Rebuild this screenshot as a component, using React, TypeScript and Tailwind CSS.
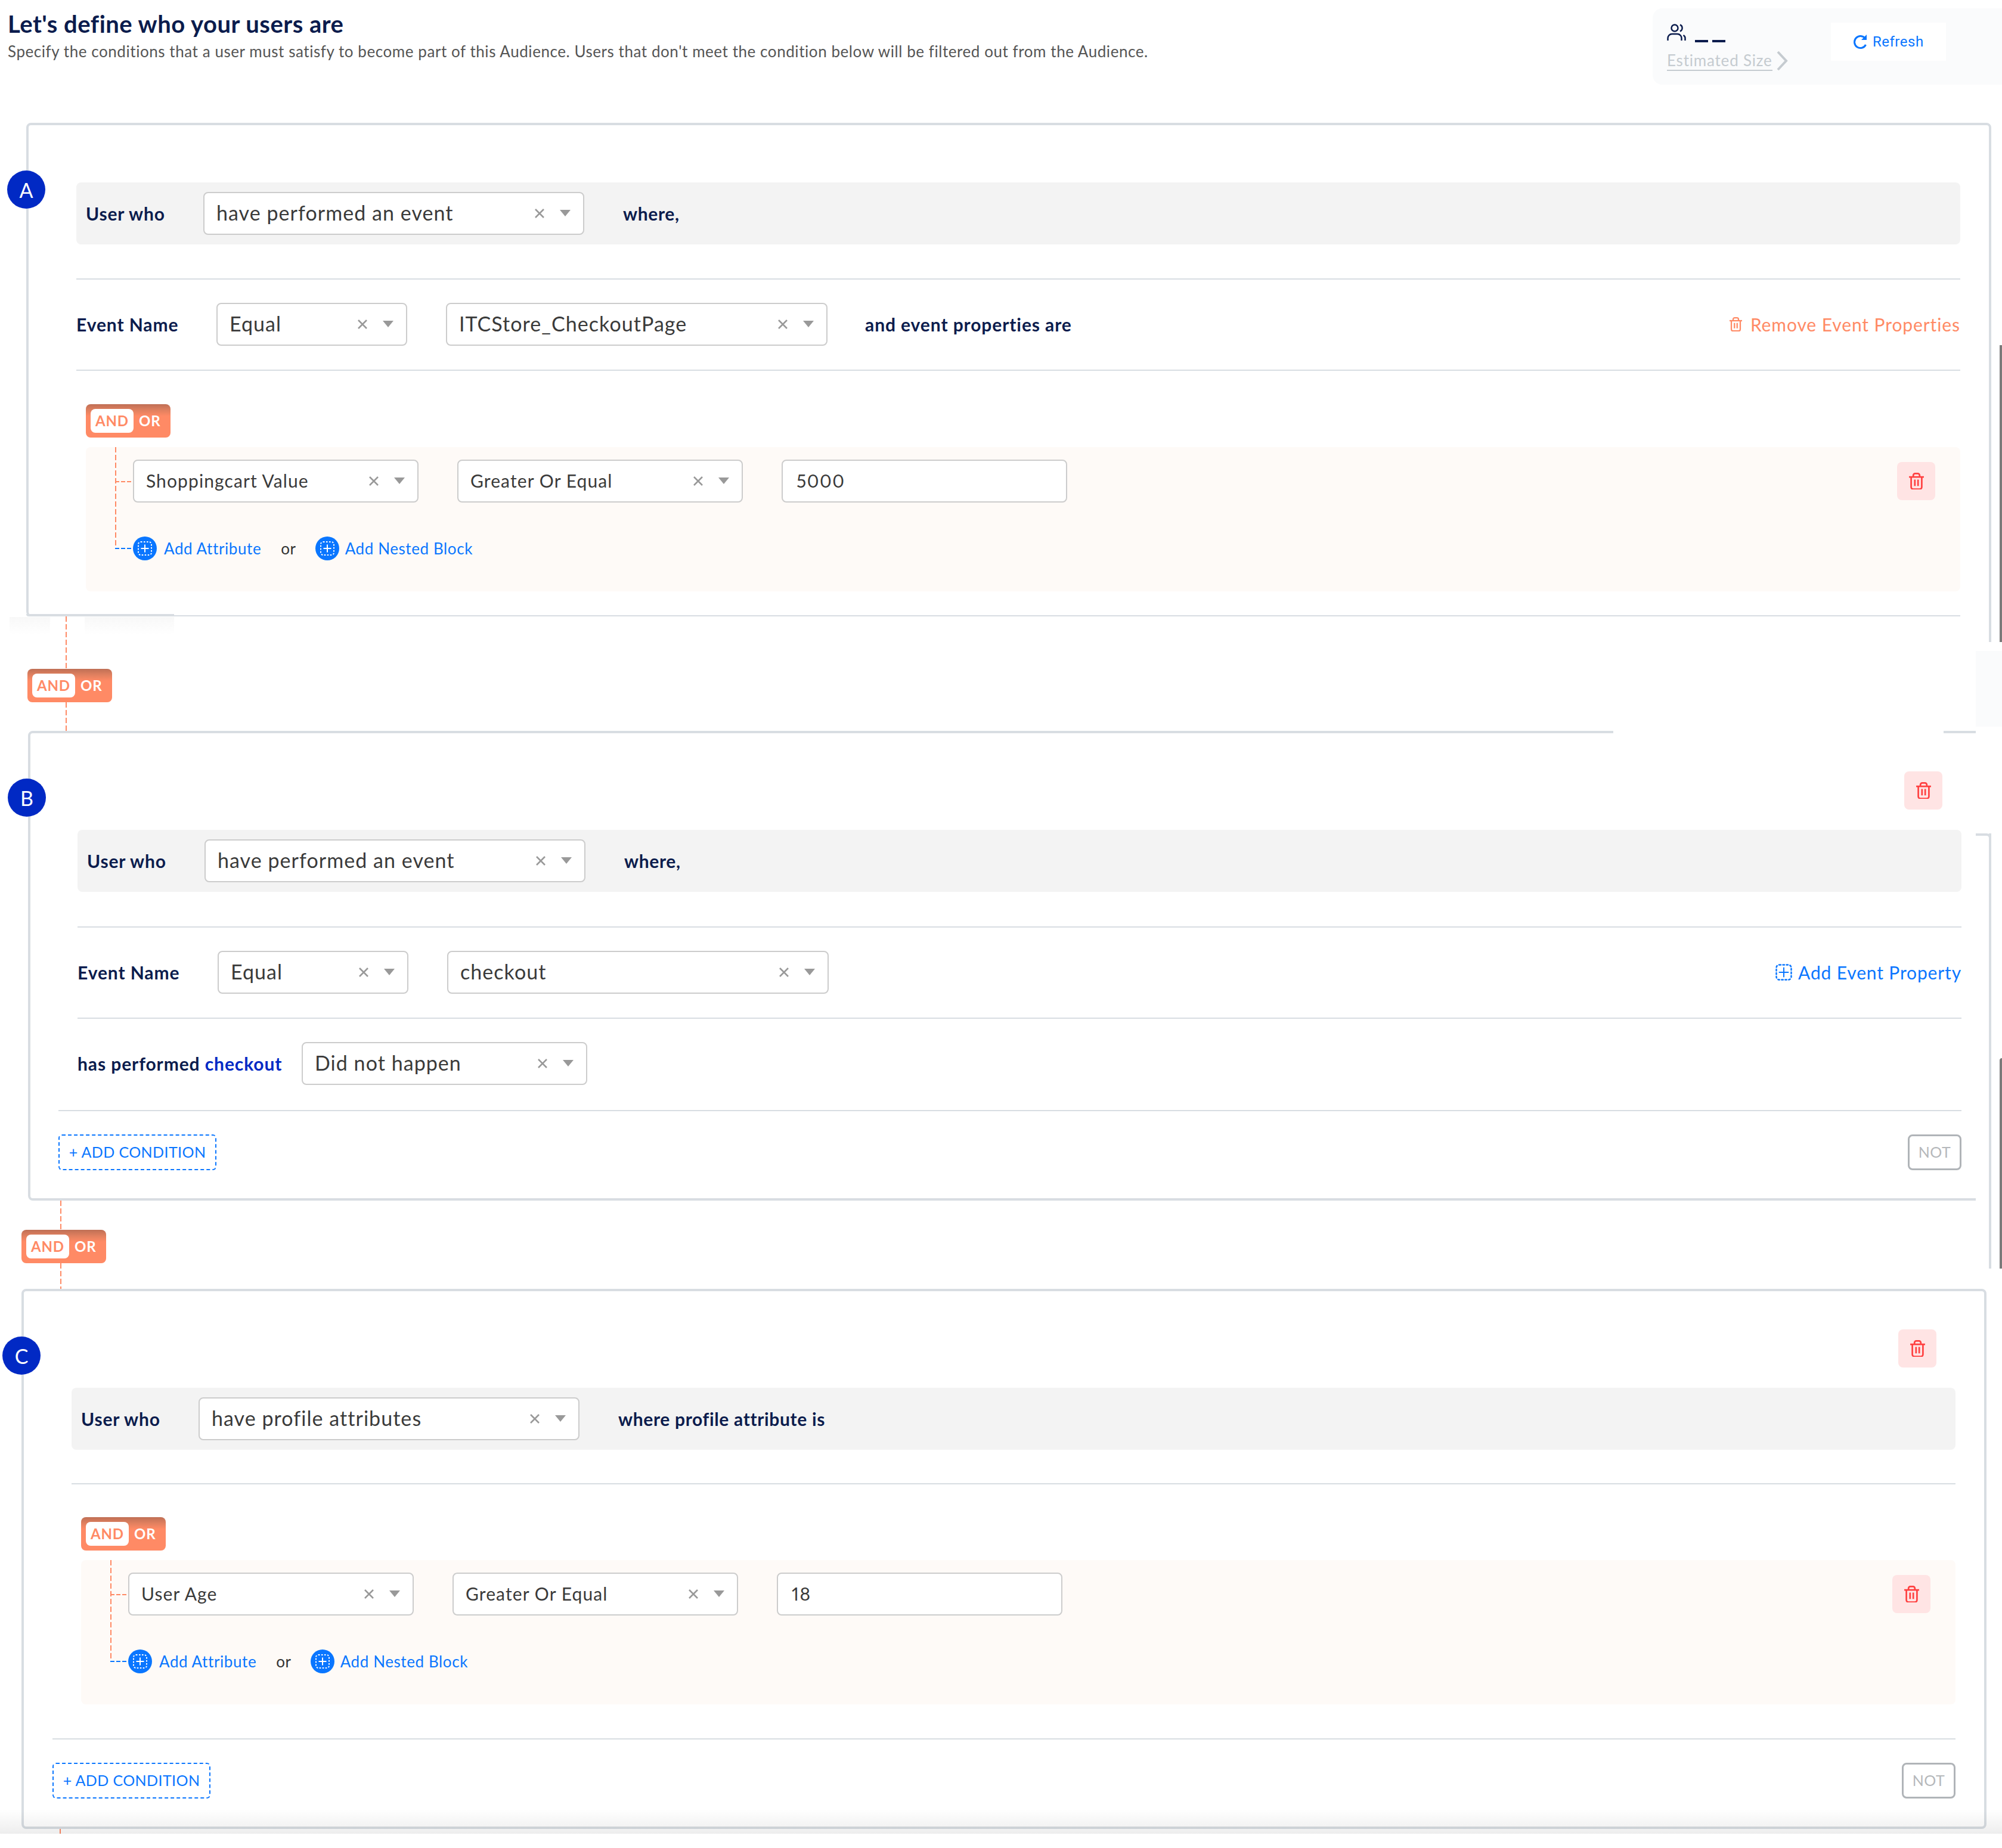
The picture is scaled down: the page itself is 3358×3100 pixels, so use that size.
import { FunctionComponent, JSX } from "react";

const Cross: FunctionComponent = (): JSX.Element => (
  <svg width="18" height="18" viewBox="0 0 18 18" className="shrink-0">
    <path d="M2 2l14 14M16 2L2 16" stroke="#999999" strokeWidth="2.6" fill="none" />
  </svg>
);

const Caret: FunctionComponent = (): JSX.Element => (
  <svg width="20" height="12" viewBox="0 0 20 12" className="shrink-0">
    <path d="M1 0h18L10 11z" fill="#999999" />
  </svg>
);

const Trash: FunctionComponent<{ color: string; size: number }> = ({ color, size }): JSX.Element => (
  <svg width={size} height={size * 1.14} viewBox="0 0 28 32" fill="none" stroke={color} strokeWidth="3" strokeLinejoin="round">
    <path d="M0 8h28" />
    <path d="M8 7V5a3.500 3.500 0 0 1 3.500-3.500h5A3.500 3.500 0 0 1 20 5v2" />
    <path d="M4 8v19a4 4 0 0 0 4 4h12a4 4 0 0 0 4-4V8" />
    <path d="M11 13v12M17 13v12" />
  </svg>
);

const Select: FunctionComponent<{ label: string; width: string; big?: boolean }> = ({ label, width, big }): JSX.Element => (
  <div className={`flex h-[72px] ${width} shrink-0 items-center rounded-lg border-2 border-[#cccccc] bg-white pl-[20px] pr-[20px]`}>
    <span className={`flex-1 text-[#3a3a3a] ${big ? "pb-[3px] text-[34px] tracking-[1.05px]" : "pb-[1px] text-[30px] tracking-[1.1px]"}`}>{label}</span>
    <div className="mr-[24px]">
      <Cross />
    </div>
    <Caret />
  </div>
);

const Toggle: FunctionComponent = (): JSX.Element => (
  <div className="flex h-[56px] w-[142px] shrink-0 items-center rounded-lg bg-[linear-gradient(to_bottom,#bf6f55_0,#e0805f_10px,#ff8a65_20px)] pl-[8px] text-[24px] font-bold tracking-[0.8px]">
    <div className="flex h-[40px] w-[72px] items-center justify-center rounded-lg bg-white text-[#ff8a65]">AND</div>
    <div className="ml-[9px] text-white">OR</div>
  </div>
);

const TrashButton: FunctionComponent<{ className: string }> = ({ className }): JSX.Element => (
  <div className={`flex h-[64px] w-[64px] shrink-0 items-center justify-center rounded-lg bg-[#ffe4e4] ${className}`}>
    <Trash color="#ff4040" size={25} />
  </div>
);

const PlusCircle: FunctionComponent = (): JSX.Element => (
  <svg width="40" height="40" viewBox="0 0 40 40" className="shrink-0">
    <circle cx="20" cy="20" r="20" fill="#0a76ff" />
    <rect x="9" y="9" width="22" height="22" rx="4" fill="none" stroke="#ffffff" strokeWidth="2" strokeDasharray="2.500 2.500" />
    <path d="M20 13.500v13M13.500 20h13" stroke="#ffffff" strokeWidth="2" />
  </svg>
);

const AttributePanel: FunctionComponent<{ attribute: string; value: string }> = ({ attribute, value }): JSX.Element => (
  <div className="relative flex h-[242px] rounded-lg bg-[#fefaf7] pl-[79px] pt-[21px]">
    <div className="absolute left-[49px] top-0 h-[169px] w-[2px] bg-[repeating-linear-gradient(to_bottom,#ff8a65_0,#ff8a65_9px,transparent_9px,transparent_13px)]" />
    <div className="absolute left-[49px] top-[57px] h-[2px] w-[30px] bg-[repeating-linear-gradient(to_right,#ff8a65_0,#ff8a65_7px,transparent_7px,transparent_10px)]" />
    <div className="absolute left-[49px] top-[169px] h-[2px] w-[30px] bg-[repeating-linear-gradient(to_right,#0a76ff_0,#0a76ff_7px,transparent_7px,transparent_10px)]" />
    <div className="flex flex-col">
      <div className="flex gap-x-[65px]">
        <Select label={attribute} width="w-[479px]" />
        <Select label="Greater Or Equal" width="w-[479px]" />
        <div className="flex h-[72px] w-[479px] items-center rounded-lg border-2 border-[#cccccc] bg-white pb-[1px] pl-[23px] text-[30px] tracking-[1.5px] text-[#3a3a3a] [font-variant-numeric:proportional-nums]">{value}</div>
      </div>
      <div className="mt-[57px] flex h-[40px] items-center text-[26px] tracking-[0.6px] text-[#0a76ff]">
        <PlusCircle />
        <span className="ml-[12px]">Add Attribute</span>
        <span className="ml-[33px] text-[#333333]">or</span>
        <div className="ml-[32px]">
          <PlusCircle />
        </div>
        <span className="ml-[10px]">Add Nested Block</span>
      </div>
    </div>
    <TrashButton className="ml-auto mr-[42px] mt-[4px]" />
  </div>
);

const UserRow: FunctionComponent<{ value: string; tail: string }> = ({ value, tail }): JSX.Element => (
  <div className="flex h-[104px] items-center rounded-lg bg-[#f3f3f3] pl-[16px]">
    <div className="w-[197px] text-[30px] font-bold tracking-[0.8px] text-[#0b1c4d]">User who</div>
    <Select label={value} width="w-[639px]" big />
    <div className="ml-[65px] text-[30px] font-bold tracking-[0.65px] text-[#0b1c4d]">{tail}</div>
  </div>
);

const AddCondition: FunctionComponent = (): JSX.Element => (
  <div className="flex h-[60px] w-[265px] items-center justify-center rounded-md border-2 border-dashed border-[#0a76ff] text-[25px] tracking-[0.4px] text-[#0a76ff]">
    + ADD CONDITION
  </div>
);

const NotButton: FunctionComponent = (): JSX.Element => (
  <div className="flex h-[60px] w-[90px] items-center justify-center rounded-lg border-[3px] border-[#b0b4b8] text-[25px] tracking-[0.5px] text-[#b5b8bb]">NOT</div>
);

const Badge: FunctionComponent<{ letter: string; className: string }> = ({ letter, className }): JSX.Element => (
  <div className={`absolute flex h-[64px] w-[64px] items-center justify-center rounded-full bg-[#0129c4] text-[34px] text-white ${className}`}>{letter}</div>
);

const Divider: FunctionComponent<{ className: string }> = ({ className }): JSX.Element => <div className={`h-[3px] border-b-2 border-[#d8dde2] ${className}`} />;

const Page: FunctionComponent = (): JSX.Element => {
  return (
    <div className="relative flex h-[3100px] w-[3358px] flex-col overflow-hidden bg-white font-['Lato',sans-serif]">
      <header className="flex h-[206px] shrink-0 items-start justify-between">
        <div className="pl-[13px] pt-[17px]">
          <div className="text-[40px] font-bold leading-[46px] tracking-[0.5px] text-[#0b1c4d]">Let's define who your users are</div>
          <div className="mt-[7px] text-[26px] leading-[32px] tracking-[0.56px] text-[#555555]">
            Specify the conditions that a user must satisfy to become part of this Audience. Users that don't meet the condition below will be filtered out from the Audience.
          </div>
        </div>
        <div className="mt-[14px] flex h-[128px] w-[586px] rounded-l-2xl bg-[#fafbfc] pl-[24px]">
          <div className="w-[275px] pt-[26px]">
            <div className="flex items-end">
              <svg width="32" height="28" viewBox="0 0 32 28" fill="none" stroke="#0b1c4d" strokeWidth="2.500">
                <circle cx="13" cy="7" r="5.500" />
                <path d="M22 1.500a6 6 0 0 1 0 11" />
                <path d="M1.500 28v-4a7 7 0 0 1 7-7h9a7 7 0 0 1 7 7v4" />
                <path d="M30.500 28v-3a6 6 0 0 0-3-6" />
              </svg>
              <div className="-mb-[3px] ml-[15px] h-[4px] w-[22px] bg-[#0b1c4d]" />
              <div className="-mb-[3px] ml-[7px] h-[4px] w-[22px] bg-[#0b1c4d]" />
            </div>
            <div className="mt-[17px] flex items-center">
              <div className="border-b-2 border-[#c5cbd0] text-[26px] leading-[32px] tracking-[0.8px] text-[#c5cbd0]">Estimated Size</div>
              <svg width="20" height="34" viewBox="0 0 20 34" fill="none" stroke="#c5cbd0" strokeWidth="4" className="ml-[6px]">
                <path d="M3 2l14 15L3 32" />
              </svg>
            </div>
          </div>
          <div className="mt-[24px] flex h-[64px] w-[193px] items-center bg-white pl-[37px] font-['Roboto',sans-serif] text-[24px] tracking-[0.5px] text-[#0a76ff]">
            <svg width="24" height="26" viewBox="0 0 24 26" fill="none" className="shrink-0">
              <path d="M20.500 7.500A10 10 0 1 0 21.500 18" stroke="#0a76ff" strokeWidth="3" />
              <path d="M23 1v9h-9z" fill="#0a76ff" />
            </svg>
            <span className="ml-[9px]">Refresh</span>
          </div>
        </div>
      </header>

      {/* audience A */}
      <section className="relative ml-[44px] h-[828px] w-[3296px] shrink-0 rounded-lg border-x-4 border-b-2 border-t-4 border-[#d8dde2] pl-[80px] pr-[48px] pt-[96px]">
        <UserRow value="have performed an event" tail="where," />
        <Divider className="mt-[56px]" />
        <div className="mt-[39px] flex items-center">
          <div className="w-[235px] text-[30px] font-bold tracking-[0.9px] text-[#0b1c4d]">Event Name</div>
          <Select label="Equal" width="w-[320px]" big />
          <div className="w-[65px]" />
          <Select label="ITCStore_CheckoutPage" width="w-[640px]" big />
          <div className="ml-[63px] text-[30px] font-bold tracking-[0.9px] text-[#0b1c4d]">and event properties are</div>
          <div className="ml-auto flex items-center text-[30px] tracking-[0.9px] text-[#ff8a65]">
            <Trash color="#ff8a65" size={21} />
            <span className="ml-[14px]">Remove Event Properties</span>
          </div>
        </div>
        <Divider className="mt-[39px]" />
        <div className="ml-[16px] mt-[56px]">
          <Toggle />
        </div>
        <div className="ml-[16px] mt-[16px]">
          <AttributePanel attribute="Shoppingcart Value" value="5000" />
        </div>
      </section>

      {/* first connector */}
      <div className="ml-[46px] flex h-[192px] shrink-0 flex-col">
        <div className="ml-[64px] h-[88px] w-[2px] bg-[repeating-linear-gradient(to_bottom,#ff8a65_0,#ff8a65_9px,transparent_9px,transparent_13px)]" />
        <Toggle />
        <div className="ml-[64px] h-[48px] w-[2px] bg-[repeating-linear-gradient(to_bottom,#ff8a65_0,#ff8a65_9px,transparent_9px,transparent_13px)]" />
      </div>

      {/* audience B */}
      <section className="relative ml-[47px] h-[788px] w-[3293px] shrink-0 rounded-lg border-4 border-[#d8dde2] pl-[79px] pr-[46px] pt-[64px]">
        <div className="flex justify-end pr-[32px]">
          <TrashButton className="" />
        </div>
        <div className="mt-[34px]">
          <UserRow value="have performed an event" tail="where," />
        </div>
        <Divider className="mt-[57px]" />
        <div className="mt-[39px] flex items-center">
          <div className="w-[235px] text-[30px] font-bold tracking-[0.9px] text-[#0b1c4d]">Event Name</div>
          <Select label="Equal" width="w-[320px]" big />
          <div className="w-[65px]" />
          <Select label="checkout" width="w-[640px]" big />
          <div className="ml-auto flex items-center text-[30px] tracking-[0.85px] text-[#0a76ff]">
            <svg width="28" height="28" viewBox="0 0 28 28" fill="none" stroke="#0a76ff" strokeWidth="2.500" strokeLinecap="round">
              <rect x="1.500" y="1.500" width="25" height="25" rx="5" strokeDasharray="2.500 3.500" />
              <path d="M14 6.500v15M6.500 14h15" strokeWidth="2" />
            </svg>
            <span className="ml-[10px]">Add Event Property</span>
          </div>
        </div>
        <Divider className="mt-[39px]" />
        <div className="mt-[39px] flex items-center">
          <div className="w-[376px] text-[30px] font-bold tracking-[0.9px] text-[#0b1c4d]">
            has performed <span className="text-[#0129c4]">checkout</span>
          </div>
          <Select label="Did not happen" width="w-[479px]" big />
        </div>
        <Divider className="-ml-[32px] mt-[41px]" />
        <div className="-ml-[32px] mt-[39px] flex items-center justify-between">
          <AddCondition />
          <NotButton />
        </div>
      </section>

      {/* second connector */}
      <div className="ml-[36px] flex h-[148px] shrink-0 flex-col">
        <div className="ml-[65px] h-[49px] w-[1.500px] bg-[repeating-linear-gradient(to_bottom,#ff8a65_0,#ff8a65_9px,transparent_9px,transparent_13px)]" />
        <Toggle />
        <div className="ml-[65px] h-[43px] w-[1.500px] bg-[repeating-linear-gradient(to_bottom,#ff8a65_0,#ff8a65_9px,transparent_9px,transparent_13px)]" />
      </div>

      {/* audience C */}
      <section className="relative ml-[36px] h-[906px] w-[3296px] shrink-0 rounded-lg border-4 border-[#d8dde2] pl-[80px] pr-[48px] pt-[64px]">
        <div className="flex justify-end pr-[32px]">
          <TrashButton className="" />
        </div>
        <div className="mt-[34px]">
          <UserRow value="have profile attributes" tail="where profile attribute is" />
        </div>
        <Divider className="mt-[55px]" />
        <div className="ml-[16px] mt-[55px]">
          <Toggle />
        </div>
        <div className="ml-[16px] mt-[16px]">
          <AttributePanel attribute="User Age" value="18" />
        </div>
        <Divider className="-ml-[32px] mt-[56px]" />
        <div className="-ml-[32px] mt-[39px] flex items-center justify-between">
          <AddCondition />
          <NotButton />
        </div>
      </section>

      <Badge letter="A" className="left-[12px] top-[286px]" />
      <Badge letter="B" className="left-[13px] top-[1306px]" />
      <Badge letter="C" className="left-[4px] top-[2242px]" />

      {/* stitching marks left in the capture */}
      <div className="absolute left-[44px] top-[1030px] h-[4px] w-[248px] rounded-bl-lg bg-[#d8dde2]" />
      <div className="absolute left-[3288px] top-[1020px] h-[16px] w-[52px] bg-white" />
      <div className="absolute left-[3336px] top-[1020px] h-[57px] w-[4px] bg-[#d8dde2]" />
      <div className="absolute left-[16px] top-[1035px] h-[29px] w-[68px] bg-gradient-to-b from-[#f8f8f8] to-white" />
      <div className="absolute left-[142px] top-[1035px] h-[29px] w-[150px] bg-gradient-to-b from-[#f8f8f8] to-white" />
      <div className="absolute left-[2706px] top-[1222px] h-[12px] w-[554px] bg-white" />
      <div className="absolute left-[3314px] top-[1222px] h-[176px] w-[44px] bg-white" />
      <div className="absolute left-[3314px] top-[1092px] h-[127px] w-[44px] bg-[#fafbfc]" />
      <div className="absolute left-[3314px] top-[1398px] h-[30px] w-[26px] rounded-tr-lg border-r-4 border-t-4 border-[#d8dde2]" />
      <div className="absolute left-[3314px] top-[1990px] h-[24px] w-[26px] bg-white" />
      <div className="absolute left-[3336px] top-[1990px] h-[138px] w-[4px] bg-[#d8dde2]" />
      <div className="absolute left-[3354px] top-[579px] h-[498px] w-[4px] bg-[#7a7a7a]" />
      <div className="absolute left-[3354px] top-[1775px] h-[353px] w-[4px] rounded-tl-md bg-[#7a7a7a]" />
      <div className="absolute left-[100px] top-[3068px] h-[8px] w-[2px] bg-[#ff8a65]" />
      <div className="absolute left-0 top-[3036px] h-[40px] w-[3358px] bg-gradient-to-b from-transparent to-black/[0.07]" />
    </div>
  );
};

export default Page;
